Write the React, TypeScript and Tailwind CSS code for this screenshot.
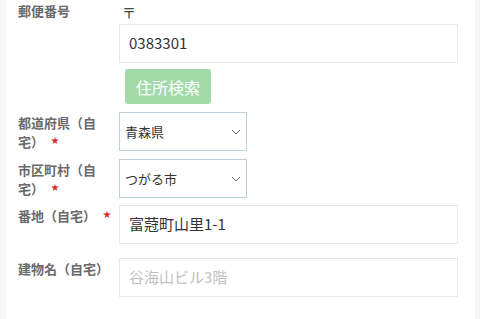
import React from "react";

const font = { fontFamily: '"Noto Sans CJK JP", "Noto Sans", sans-serif' };

function Star() {
  return <span className="ml-[7px] inline-block align-top pt-[4px] text-[8px] leading-[8px] text-[#e3261c]">★</span>;
}

function Label({ text, required }: { text: string; required?: boolean }) {
  return (
    <div className="w-[101px] shrink-0 pr-[8px] pt-[1px] text-[13px] font-semibold leading-[19px] text-[#6a6a6a]">
      {text}
      {required && <Star />}
    </div>
  );
}

function Chevron() {
  return (
    <svg width="10" height="6" viewBox="0 0 10 6" className="shrink-0">
      <polyline points="1,1 5,5 9,1" fill="none" stroke="#666" strokeWidth="1" />
    </svg>
  );
}

function SelectBox({ value }: { value: string }) {
  return (
    <div className="flex h-[39px] w-[128px] items-center justify-between border border-[#b9d4da] bg-white pl-[5px] pr-[5px] text-[13px] text-[#333]">
      <span>{value}</span>
      <Chevron />
    </div>
  );
}

function TextBox({ value, placeholder }: { value?: string; placeholder?: string }) {
  return (
    <div className="flex h-[39px] w-full items-center border border-[#e5e8ec] bg-white pl-[9px] text-[15px]">
      {value ? <span className="text-[#333]">{value}</span> : <span className="text-[#c2c2c2]">{placeholder}</span>}
    </div>
  );
}

export default function App() {
  return (
    <div className="flex min-h-[319px] w-[480px] bg-[#f5f6f8] pl-[6px] pr-[5px]" style={font}>
      <div className="flex flex-1 flex-col bg-white pl-[12px] pr-[17px]">
        <div className="flex">
          <Label text="郵便番号" />
          <div className="flex flex-1 flex-col">
            <div className="h-[24px] pl-[3px] pt-[2px] text-[14px] leading-[20px] text-[#444]">〒</div>
            <TextBox value="0383301" />
            <div className="mt-[6px] pl-[6px]">
              <button className="h-[35px] rounded-[3px] bg-[#a2dba8] px-[11px] text-[16px] text-white">住所検索</button>
            </div>
          </div>
        </div>

        <div className="mt-[8px] flex">
          <Label text="都道府県（自宅）" required />
          <SelectBox value="青森県" />
        </div>

        <div className="mt-[8px] flex">
          <Label text="市区町村（自宅）" required />
          <SelectBox value="つがる市" />
        </div>

        <div className="mt-[7px] flex">
          <Label text="番地（自宅）" required />
          <div className="flex-1">
            <TextBox value="富蒄町山里1-1" />
          </div>
        </div>

        <div className="mt-[14px] flex">
          <Label text="建物名（自宅）" />
          <div className="flex-1">
            <TextBox placeholder="谷海山ビル3階" />
          </div>
        </div>
      </div>
    </div>
  );
}
